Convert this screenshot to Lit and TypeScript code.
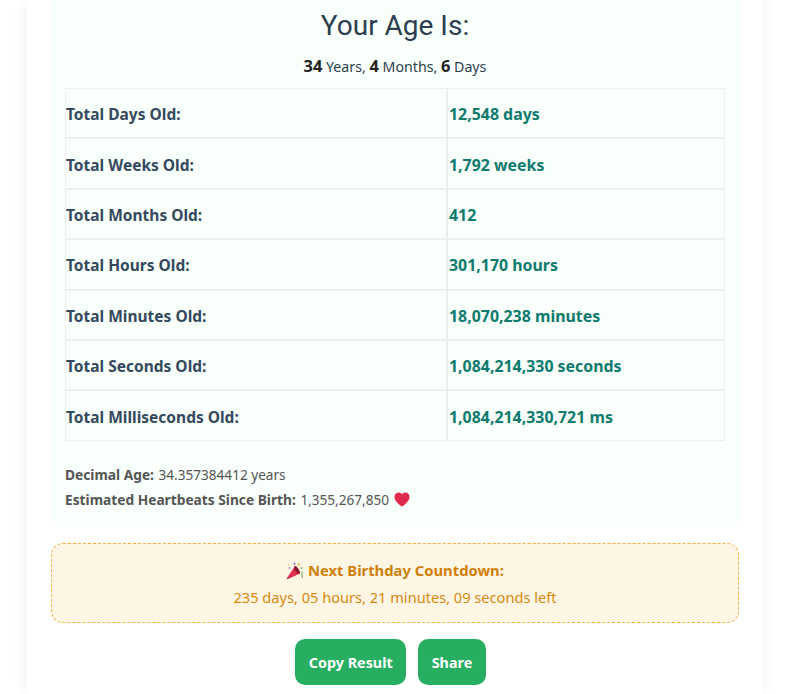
import { LitElement, html, css } from "lit";
import { customElement } from "lit/decorators.js";

const rows: [string, string][] = [
  ["Total Days Old:", "12,548 days"],
  ["Total Weeks Old:", "1,792 weeks"],
  ["Total Months Old:", "412"],
  ["Total Hours Old:", "301,170 hours"],
  ["Total Minutes Old:", "18,070,238 minutes"],
  ["Total Seconds Old:", "1,084,214,330 seconds"],
  ["Total Milliseconds Old:", "1,084,214,330,721 ms"],
];

@customElement("app-root")
export class AppRoot extends LitElement {
  static styles = css`
    :host {
      display: block;
      height: 694px;
      overflow: hidden;
      background: #ffffff;
      font-family: "Noto Sans", "Open Sans", sans-serif;
    }
    .card {
      width: 736px;
      box-sizing: border-box;
      margin: 0 auto;
      height: 694px;
      padding: 0 24px;
      background: #fff;
      box-shadow: 0 0 15px rgba(0, 0, 0, 0.06);
    }
    .result {
      background: #f9fffb;
      border-radius: 0 0 12px 12px;
      padding: 0 14px 16px;
      height: 528px;
      box-sizing: border-box;
    }
    h2 {
      margin: 0;
      padding-top: 8px;
      font: 400 28px/36px Roboto, sans-serif;
      color: #2c3e50;
      text-align: center;
    }
    .summary {
      margin: 12px 0 0;
      text-align: center;
      font-size: 14.2px;
      line-height: 19px;
      color: #2c3e50;
      height: 32px;
    }
    .summary b {
      font-size: 16.4px;
      color: #222;
    }
    table {
      width: 660px;
      table-layout: fixed;
      border-collapse: separate;
      border-spacing: 0;
      font-weight: 700;
    }
    td {
      border: 1px solid #eeeeee;
      height: 46.4px;
      padding: 2px 0 0;
      box-sizing: content-box;
    }
    td.k {
      width: 380px;
      color: #34495e;
      font-size: 15.5px;
    }
    td.v {
      color: #0f7a6e;
      font-size: 15.9px;
      padding-left: 1px;
    }
    .extra {
      margin-top: 21px;
      font-size: 13.6px;
      color: #555;
    }
    .extra div {
      height: 25px;
      line-height: 25px;
    }
    .extra b {
      font-size: 13.74px;
      margin-right: 1px;
    }
    .heart {
      width: 16px;
      height: 15px;
      margin-left: 1px;
      vertical-align: -2px;
    }
    .countdown {
      margin-top: 15px;
      height: 80px;
      box-sizing: border-box;
      border: 1px dashed #f5b041;
      border-radius: 12px;
      background: #fef6e4;
      text-align: center;
      color: #d68910;
      padding-top: 14px;
    }
    .countdown .t {
      height: 25px;
      font-size: 14.8px;
      font-weight: 700;
      line-height: 24px;
      color: #cf7f08;
    }
    .countdown .c {
      font-size: 14.6px;
      line-height: 29px;
    }
    .popper {
      width: 18px;
      height: 18px;
      vertical-align: -4px;
    }
    .actions {
      margin-top: 16px;
      display: flex;
      justify-content: center;
      gap: 12px;
      padding-right: 9px;
    }
    button {
      height: 46px;
      padding: 0 13.5px;
      border: none;
      border-radius: 10px;
      background: #27ae60;
      color: #fff;
      font: 700 14.37px "Noto Sans", sans-serif;
    }
  `;

  render() {
    return html`
      <div class="card">
        <section class="result">
          <h2>Your Age Is:</h2>
          <p class="summary"><b>34</b> Years, <b>4</b> Months, <b>6</b> Days</p>
          <table>
            ${rows.map(
              ([k, v]) => html`<tr><td class="k">${k}</td><td class="v">${v}</td></tr>`
            )}
          </table>
          <div class="extra">
            <div><b>Decimal Age:</b> 34.357384412 years</div>
            <div>
              <b>Estimated Heartbeats Since Birth:</b> 1,355,267,850
              <svg class="heart" viewBox="0 0 16 15" role="img" aria-label="heart">
                <path
                  fill="#e0284a"
                  d="M8 14.6C3.4 11 .5 8.3.5 4.9.5 2.4 2.4.6 4.6.6 6 .6 7.3 1.3 8 2.5 8.7 1.3 10 .6 11.4.6c2.2 0 4.1 1.8 4.1 4.3 0 3.4-2.9 6.1-7.5 9.7z"
                />
              </svg>
            </div>
          </div>
        </section>
        <section class="countdown">
          <div class="t">
            <svg class="popper" viewBox="0 0 18 18" role="img" aria-label="party popper">
              <path fill="#e0304e" d="M9 4l5 7.500L1.600 17.200c-.6.2-1-.3-.8-.9z" />
              <path fill="#8c1230" d="M9 4c-1 .6-.9 2.900.4 5s3.400 3.300 4.200 2.700c.8-.6.300-2.400-.9-4.400S9.800 3.400 9 4z" />
              <circle cx="8.500" cy="1.800" r="1.200" fill="#b58ad8" />
              <circle cx="12.800" cy="2.200" r="1.300" fill="#e7c65a" />
              <circle cx="15.500" cy="6" r="1.100" fill="#8fb56a" />
              <circle cx="3.500" cy="6" r="1" fill="#b58ad8" />
              <path fill="none" stroke="#8fb56a" stroke-width="1.200" d="M15.500 9.500l.8 1.500-.6 1.500.8 1.500-.6 2" />
              <path fill="none" stroke="#e7c65a" stroke-width="1" d="M2 2l.6 1.400" />
            </svg>
            Next Birthday Countdown:
          </div>
          <div class="c">235 days, 05 hours, 21 minutes, 09 seconds left</div>
        </section>
        <div class="actions">
          <button>Copy Result</button>
          <button>Share</button>
        </div>
      </div>
    `;
  }
}
